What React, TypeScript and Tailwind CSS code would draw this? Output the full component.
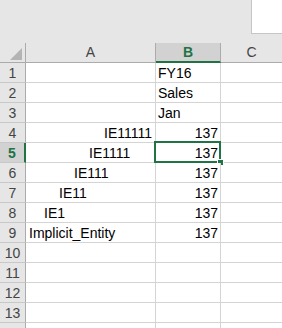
const rows: { n: number; a?: string; indent?: number; b?: string; num?: boolean }[] = [
  { n: 1, b: "FY16" },
  { n: 2, b: "Sales" },
  { n: 3, b: "Jan" },
  { n: 4, a: "IE11111", indent: 5, b: "137", num: true },
  { n: 5, a: "IE1111", indent: 4, b: "137", num: true },
  { n: 6, a: "IE111", indent: 3, b: "137", num: true },
  { n: 7, a: "IE11", indent: 2, b: "137", num: true },
  { n: 8, a: "IE1", indent: 1, b: "137", num: true },
  { n: 9, a: "Implicit_Entity", indent: 0, b: "137", num: true },
  { n: 10 },
  { n: 11 },
  { n: 12 },
  { n: 13 },
  { n: 14 },
]

const App = () => {
  return (
    <div
      className="w-[282px] h-[328px] overflow-hidden bg-[#e6e6e6] text-[14px] text-black"
      style={{ fontFamily: '"Liberation Sans", Arial, sans-serif' }}
    >
      {/* ribbon strip */}
      <div className="h-[43px] flex justify-end">
        <div className="w-[31px] h-[34px] bg-white border-l border-b border-[#c6c6c6]" />
      </div>

      {/* column headers */}
      <div className="flex h-[20px] leading-[19px] text-[#444]">
        <div className="w-[26px] border-r border-b border-[#ababab] relative">
          <svg className="absolute left-[10px] top-[5px]" width="12" height="12" viewBox="0 0 12 12">
            <polygon points="12,0 12,12 0,12" fill="#b4b4b4" />
          </svg>
        </div>
        <div className="w-[130px] border-r border-b border-[#ababab] text-center">A</div>
        <div className="w-[65px] bg-[#d2d2d2] border-r border-[#ababab] border-b-2 border-b-[#217346] text-center text-[#217346] font-bold">
          B
        </div>
        <div className="flex-1 border-b border-[#ababab] text-center">C</div>
      </div>

      {/* rows */}
      {rows.map((r) => {
        const sel = r.n === 5
        return (
          <div key={r.n} className="flex h-[20px] leading-[21px]">
            <div
              className={
                sel
                  ? "w-[26px] bg-[#d2d2d2] border-b border-[#c8c8c8] border-r-2 border-r-[#217346] text-center text-[#217346] font-bold"
                  : "w-[26px] border-b border-[#c8c8c8] border-r border-r-[#ababab] text-center text-[#444]"
              }
            >
              {r.n < 14 ? r.n : ""}
            </div>
            <div
              className="w-[130px] bg-white border-r border-b border-[#d4d4d4] whitespace-nowrap overflow-hidden"
              style={{ paddingLeft: 3 + (r.indent ?? 0) * 15 }}
            >
              {r.a}
            </div>
            <div
              className={
                "w-[65px] bg-white border-r border-b border-[#d4d4d4] relative " +
                (r.num ? "text-right pr-[2px]" : "pl-[2px]")
              }
            >
              {r.b}
              {sel && (
                <>
                  <div className="absolute left-[-2px] top-[-2px] w-[67px] h-[22px] border-2 border-[#217346]" />
                  <div className="absolute right-[-4px] bottom-[-4px] w-[7px] h-[7px] bg-[#217346] border border-white" />
                </>
              )}
            </div>
            <div className="flex-1 bg-white border-b border-[#d4d4d4]" />
          </div>
        )
      })}
    </div>
  )
}

export default App
